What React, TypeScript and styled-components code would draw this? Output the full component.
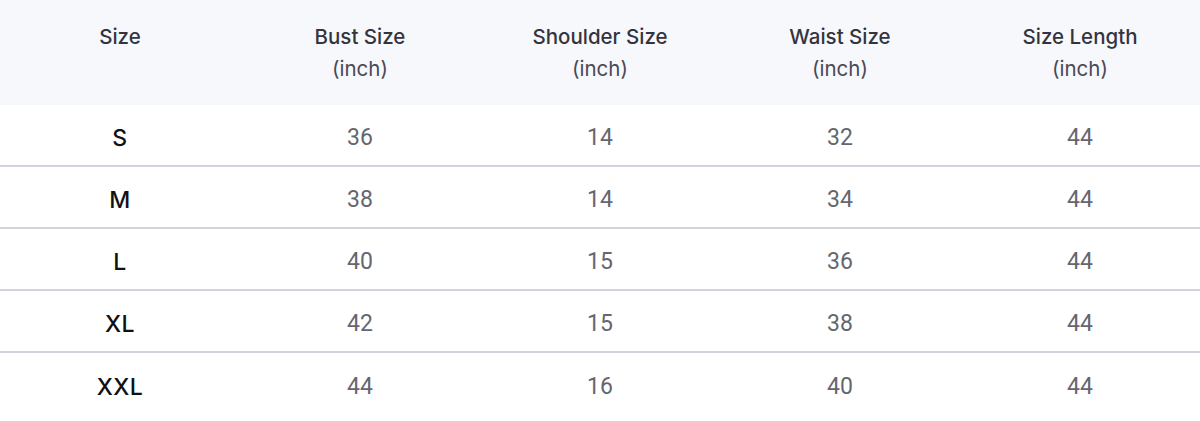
import React from 'react'
import styled, { createGlobalStyle } from 'styled-components'

const GlobalStyle = createGlobalStyle`
  html, body {
    margin: 0;
    padding: 0;
    background: #ffffff;
  }
`

const Table = styled.div`
  width: 1200px;
  display: flex;
  flex-direction: column;
`

const HeaderRow = styled.div`
  display: grid;
  grid-template-columns: repeat(5, 1fr);
  height: 105px;
  box-sizing: border-box;
  padding-top: 21px;
  background-color: #f7f8fc;
`

const HeadCell = styled.div`
  display: flex;
  flex-direction: column;
  align-items: center;
  font-family: Inter, 'Noto Sans', sans-serif;
  font-size: 20.5px;
  font-weight: 500;
  line-height: 32px;
  color: #34343f;
`

const Unit = styled.span`
  font-weight: 400;
  color: #4a4a55;
`

const Row = styled.div<{ last?: boolean }>`
  display: grid;
  grid-template-columns: repeat(5, 1fr);
  align-items: center;
  height: 62px;
  box-sizing: border-box;
  border-bottom: ${({ last }) => (last ? 'none' : '2px solid #d2d2dc')};
`

const SizeCell = styled.div`
  text-align: center;
  font-family: Inter, 'Noto Sans', sans-serif;
  font-size: 23px;
  font-weight: 500;
  letter-spacing: 0.5px;
  color: #111114;
  padding-top: 6px;
`

const ValueCell = styled.div`
  text-align: center;
  font-family: Roboto, sans-serif;
  font-size: 23px;
  color: #65666e;
  padding-top: 5px;
`

const columns = ['Bust Size', 'Shoulder Size', 'Waist Size', 'Size Length']

const rows: [string, number, number, number, number][] = [
  ['S', 36, 14, 32, 44],
  ['M', 38, 14, 34, 44],
  ['L', 40, 15, 36, 44],
  ['XL', 42, 15, 38, 44],
  ['XXL', 44, 16, 40, 44],
]

export default function App() {
  return (
    <>
      <GlobalStyle />
      <Table>
        <HeaderRow>
          <HeadCell>Size</HeadCell>
          {columns.map((c) => (
            <HeadCell key={c}>
              {c}
              <Unit>(inch)</Unit>
            </HeadCell>
          ))}
        </HeaderRow>
        {rows.map(([size, ...values], i) => (
          <Row key={size} last={i === rows.length - 1}>
            <SizeCell>{size}</SizeCell>
            {values.map((v, j) => (
              <ValueCell key={j}>{v}</ValueCell>
            ))}
          </Row>
        ))}
      </Table>
    </>
  )
}
